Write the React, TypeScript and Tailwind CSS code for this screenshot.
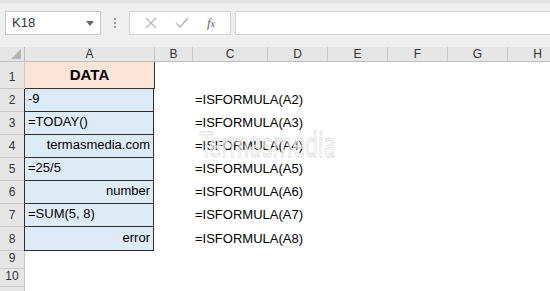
import React from 'react';

const font = { fontFamily: '"Liberation Sans", Arial, sans-serif' };

const cols = ['A', 'B', 'C', 'D', 'E', 'F', 'G', 'H'];

const rows: { n: number; h: string; a?: string; align?: 'left' | 'right'; c?: string }[] = [
  { n: 2, h: 'h-[23px]', a: '-9', align: 'left', c: '=ISFORMULA(A2)' },
  { n: 3, h: 'h-[23px]', a: '=TODAY()', align: 'left', c: '=ISFORMULA(A3)' },
  { n: 4, h: 'h-[23px]', a: 'termasmedia.com', align: 'right', c: '=ISFORMULA(A4)' },
  { n: 5, h: 'h-[23px]', a: '=25/5', align: 'left', c: '=ISFORMULA(A5)' },
  { n: 6, h: 'h-[23px]', a: 'number', align: 'right', c: '=ISFORMULA(A6)' },
  { n: 7, h: 'h-[23px]', a: '=SUM(5, 8)', align: 'left', c: '=ISFORMULA(A7)' },
  { n: 8, h: 'h-[24px]', a: 'error', align: 'right', c: '=ISFORMULA(A8)' },
];

const widths = ['w-[130px]', 'w-[38px]', 'w-[75px]', 'w-[60px]', 'w-[60px]', 'w-[60px]', 'w-[60px]', 'w-[60px]'];

const Toolbar = () => (
  <div className="h-[47px] bg-[#efefef] border-t-[3px] border-[#e3e3e3] flex items-start pt-[8px] pl-[5px]">
    <div className="w-[96px] h-[24px] bg-white border border-[#c8c8c8] flex items-center justify-between pl-[6px] pr-[6px]">
      <span className="text-[13px] text-[#333]">K18</span>
      <svg width="8" height="5" viewBox="0 0 8 5"><path d="M0 0 L8 0 L4 5 Z" fill="#666" /></svg>
    </div>
    <div className="w-[28px] h-[24px] flex flex-col items-center justify-center gap-[2px]">
      <span className="w-[2px] h-[2px] bg-[#999]" />
      <span className="w-[2px] h-[2px] bg-[#999]" />
      <span className="w-[2px] h-[2px] bg-[#999]" />
    </div>
    <div className="w-[102px] h-[24px] bg-white border border-[#d4d4d4] flex items-center justify-around px-[6px]">
      <svg width="12" height="12" viewBox="0 0 12 12"><path d="M1 1 L11 11 M11 1 L1 11" stroke="#b8b8b8" strokeWidth="1.3" fill="none" /></svg>
      <svg width="14" height="12" viewBox="0 0 14 12"><path d="M1 6 L5 10 L13 1" stroke="#b8b8b8" strokeWidth="1.4" fill="none" /></svg>
      <span className="text-[13px] italic text-[#666]" style={{ fontFamily: '"Liberation Serif", serif' }}>
        f<span className="text-[10px]">x</span>
      </span>
    </div>
    <div className="ml-[4px] flex-1 h-[24px] bg-white border border-[#d4d4d4] border-r-0" />
  </div>
);

const App = () => {
  return (
    <div className="w-[550px] h-[291px] overflow-hidden bg-white relative" style={font}>
      <Toolbar />
      {/* column headers */}
      <div className="flex h-[15px] bg-[#e6e6e6] border-b border-[#bdbdbd]">
        <div className="w-[25px] shrink-0 border-r border-[#bdbdbd] relative">
          <svg className="absolute right-[3px] bottom-[2px]" width="10" height="10" viewBox="0 0 10 10"><path d="M10 0 L10 10 L0 10 Z" fill="#b4b4b4" /></svg>
        </div>
        {cols.map((c, i) => (
          <div key={c} className={`${widths[i]} shrink-0 border-r border-[#c8c8c8] flex items-center justify-center text-[12px] text-[#333] leading-none`}>
            {c}
          </div>
        ))}
      </div>

      {/* row 1 */}
      <div className="flex h-[27px]">
        <div className="w-[25px] shrink-0 bg-[#e6e6e6] border-r border-b border-[#c8c8c8] flex items-end justify-center pb-[2px] text-[12px] text-[#333]">1</div>
        <div className="w-[130px] shrink-0 bg-[#fce4d6] border-r border-b border-[#333] flex items-center justify-center text-[15px] font-bold text-black">DATA</div>
      </div>

      {rows.map((r) => (
        <div key={r.n} className={`flex ${r.h}`}>
          <div className="w-[25px] shrink-0 bg-[#e6e6e6] border-r border-b border-[#c8c8c8] flex items-end justify-center pb-[2px] text-[12px] text-[#333]">{r.n}</div>
          <div
            className={`w-[130px] shrink-0 bg-[#ddebf7] border-r border-b border-l border-[#2f2f2f] -ml-px flex items-end pb-[3px] px-[3px] text-[13px] text-black ${r.align === 'right' ? 'justify-end' : 'justify-start'}`}
          >
            {r.a}
          </div>
          <div className="w-[38px] shrink-0" />
          <div className="w-[150px] shrink-0 flex items-end pb-[3px] pl-[3px] text-[13px] text-black whitespace-nowrap">{r.c}</div>
        </div>
      ))}

      {[9, 10, 11].map((n) => (
        <div key={n} className="flex h-[18px]">
          <div className="w-[25px] shrink-0 bg-[#e6e6e6] border-r border-b border-[#c8c8c8] flex items-end justify-center pb-[1px] text-[12px] text-[#333]">{n === 11 ? '' : n}</div>
        </div>
      ))}

      {/* watermark */}
      <span
        className="absolute left-[200px] top-[128px] text-[34px] leading-none text-white/60 scale-x-[0.6] origin-left pointer-events-none whitespace-nowrap"
        style={{ fontFamily: '"DejaVu Sans", sans-serif', WebkitTextStroke: '1px #dcdcdc' }}
      >
        Termasmedia
      </span>
    </div>
  );
};

export default App;
